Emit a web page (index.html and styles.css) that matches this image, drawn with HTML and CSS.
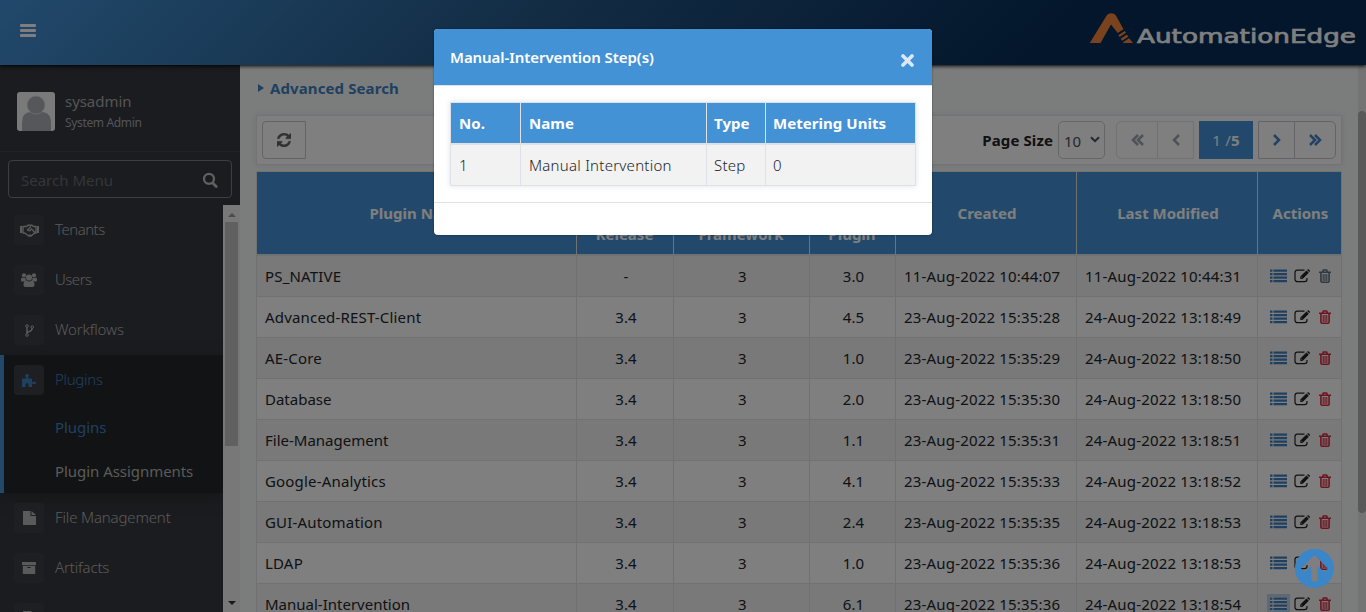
FILE: index.html
```html
<!DOCTYPE html>
<html lang="en">
<head>
<meta charset="utf-8">
<title>AutomationEdge</title>
<link rel="stylesheet" href="styles.css">
</head>
<body>
<svg class="defs" aria-hidden="true">
  <symbol id="list" viewBox="0 0 17 14"><path d="M0 .5h2.500v2.300H0zM3.500 .5H17v2.300H3.500zM0 4h2.500v2.300H0zM3.500 4H17v2.300H3.500zM0 7.500h2.500v2.300H0zM3.500 7.500H17v2.300H3.500zM0 11h2.500v2.300H0zM3.500 11H17v2.300H3.500z" fill="currentColor"/></symbol>
  <symbol id="edit" viewBox="0 0 17 14"><path d="M10.500 1.200H3.400A2.400 2.400 0 0 0 1 3.600v6.700a2.400 2.400 0 0 0 2.400 2.400h7.200a2.400 2.400 0 0 0 2.400-2.400V9" fill="none" stroke="currentColor" stroke-width="1.200"/><path d="M6.300 7.600 12.500 1.500l2.300 2.300-6.200 6.200H6.300zM13.100.9l.7-.6q.5-.3 1 .1l1 1q.4.500 0 1l-.6.700z" fill="currentColor"/><path d="M7.200 8l1.300 1.300" stroke="#ccc" stroke-width=".7"/></symbol>
  <symbol id="trash" viewBox="0 0 12 14"><path d="M0 3.200h12M3.700 2.800l.7-1.800h3.200l.7 1.800M1.900 3.200v8.800q0 1.200 1.200 1.200h5.800q1.200 0 1.200-1.200V3.200" fill="none" stroke="currentColor" stroke-width="1.600"/><path d="M4.200 5v7M6 5v7M7.800 5v7" stroke="currentColor" stroke-width="1.100"/></symbol>
  <symbol id="search" viewBox="0 0 16 16"><path d="M11 11.200 14.200 14.400" stroke="currentColor" stroke-width="2.800" stroke-linecap="round"/><circle cx="7" cy="6.800" r="5" fill="none" stroke="currentColor" stroke-width="2.300"/></symbol>
  <symbol id="refresh" viewBox="0 0 1536 1536"><path fill="currentColor" stroke="currentColor" stroke-width="30" d="M1511 928q0 5-1 7-64 268-268 434.500T764 1536q-146 0-282.500-55T238 1324l-129 129q-19 19-45 19t-45-19-19-45V960q0-26 19-45t45-19h448q26 0 45 19t19 45-19 45l-137 137q71 66 161 102t187 36q134 0 250-65t186-179q11-17 53-117 8-23 30-23h192q13 0 22.500 9.500t9.500 22.500zm25-800v448q0 26-19 45t-45 19h-448q-26 0-45-19t-19-45 19-45l138-138Q969 256 768 256q-134 0-250 65T332 500q-11 17-53 117-8 23-30 23H50q-13 0-22.500-9.500T18 608v-7q65-268 270-434.500T768 0q146 0 284 55.500T1297 212l130-129q19-19 45-19t45 19 19 45z"/></symbol>
</svg>

<header class="topbar">
  <div class="burger"><i></i><i></i><i></i></div>
  <svg class="logo" viewBox="0 0 268 40">
    <path fill="#f5873a" d="M.8 32 17 5.500Q19 2.300 22.300 2.300T27.500 5.500L34.500 18.300 28.800 22 22 13.500 11.500 32zM29.300 24.200l6.500-4.300 1.200 1.900-6.300 4.200zM31.700 27.700l6.200-4.200 1.300 2.200-6.100 4zM34.300 31l5.800-3.700L44 32H34.300z"/>
    <text x="48" y="32" textLength="219" lengthAdjust="spacingAndGlyphs">AutomationEdge</text>
  </svg>
</header>

<div class="page">
  <aside class="sidebar">
    <div class="user">
      <svg class="avatar" viewBox="0 0 38 39"><rect width="38" height="39" rx="3" fill="#f4f4f4"/><path d="M5 39V31q0-11 9-11h10q10 0 10 11v8z" fill="#abafb4"/><circle cx="19" cy="13" r="9" fill="#abafb4" stroke="#dcdcdc" stroke-width=".8"/></svg>
      <div><p class="user-name">sysadmin</p><p class="user-role">System Admin</p></div>
    </div>
    <div class="search"><span>Search Menu</span><svg><use href="#search"/></svg></div>
    <div class="menu-wrap">
      <nav class="menu">
        <a class="item"><span class="tile"><svg width="19" height="13" viewBox="0 0 19 13"><path fill="none" stroke="currentColor" stroke-width="1.400" d="M3 2.500h3.500L8 1.300h4l1.500 1.200H16v6.500h-1.500L11 12H9L4.500 9H3zM11 2.500 7.500 5.700q1.500 1.800 3 .3l1-1L15 8.500M9.500 10.500l1 1"/><path fill="currentColor" d="M0 2h2v7H0zM17 2h2v7h-2z"/></svg></span><span>Tenants</span></a>
        <a class="item"><span class="tile"><svg width="16" height="14" viewBox="0 0 16 14" fill="currentColor"><circle cx="3" cy="2.300" r="2.100"/><circle cx="13" cy="2.300" r="2.100"/><circle cx="8" cy="4.500" r="3.100"/><path d="M0 8V6.500q0-2 1.500-2 2 1 2.800 0Q4.500 7 5.500 7.500 3.500 7.500 3 8.600H.8zM16 8V6.500q0-2-1.500-2-2 1-2.800 0-.2 2.500-1.200 3 2 0 2.500 1.100h2.200zM2.500 12q0-4.500 2.800-4.500 2.700 2 5.400 0 2.800 0 2.800 4.500 0 2-2 2h-7q-2 0-2-2z"/></svg></span><span>Users</span></a>
        <a class="item"><span class="tile"><svg width="9" height="13" viewBox="0 0 9 13"><path d="M2 3v7M7.300 3.500q0 3-3 4Q2 8 2 9.500" fill="none" stroke="currentColor" stroke-width="1.500"/><g fill="#30353b" stroke="currentColor"><circle cx="2" cy="2" r="1.300"/><circle cx="2" cy="11" r="1.300"/><circle cx="7.200" cy="3" r="1.300"/></g></svg></span><span>Workflows</span></a>
        <div class="open">
          <a class="item on"><span class="tile"><svg width="14" height="13" viewBox="0 0 14 13" fill="currentColor"><path d="M0 4.500h4.200V3.800Q3 2.500 3.300 1.300 3.800 0 5 0t1.700 1.300Q7 2.500 5.900 3.800v.7H10V8q1 .4 1.600-.2.600-.7 1.500-.2.900.4.900 1.300t-.9 1.300q-.9.400-1.500-.2Q11 9.500 10 9.800V13H6.500v-2.500Q6.300 9 5 9t-1.500 1.500V13H0z"/></svg></span><span>Plugins</span></a>
          <a class="sub on">Plugins</a>
          <a class="sub">Plugin Assignments</a>
        </div>
        <a class="item"><span class="tile"><svg width="13" height="14" viewBox="0 0 13 14" fill="currentColor"><path d="M0 0h7.500v5H13v9H0zM8.500 0 13 4H8.500z"/></svg></span><span>File Management</span></a>
        <a class="item"><span class="tile"><svg width="14" height="12" viewBox="0 0 14 12" fill="currentColor"><path d="M0 0h14v3H0z"/><path fill-rule="evenodd" d="M.8 3.800h12.400V12H.8zM5.300 5v1h3.400V5z"/></svg></span><span>Artifacts</span></a>
        <a class="item"><span class="tile"><svg width="13" height="14" viewBox="0 0 13 14" fill="currentColor"><path d="M0 0h8l5 5v9H0z"/></svg></span></a>
      </nav>
      <div class="side-scroll"><i class="up"></i><b></b><i class="down"></i></div>
    </div>
  </aside>

  <main class="content">
    <h2 class="adv"><i></i>Advanced Search</h2>
    <div class="toolbar">
      <span class="refresh"><svg><use href="#refresh"/></svg></span>
      <div class="paging">
        <b class="size-label">Page Size</b>
        <span class="size">10<svg width="10" height="7" viewBox="0 0 10 7"><path d="M1 1.200l4 4 4-4" fill="none" stroke="currentColor" stroke-width="2"/></svg></span>
        <span class="pair left"><i><svg width="13" height="12" viewBox="0 0 13 12"><path d="M7 1 2 6l5 5M12 1 7 6l5 5"/></svg></i><i><svg width="8" height="12" viewBox="0 0 8 12"><path d="M7 1 2 6l5 5"/></svg></i></span>
        <span class="current">1 /<b>5</b></span>
        <span class="pair right"><i><svg width="8" height="12" viewBox="0 0 8 12"><path d="M1 1l5 5-5 5"/></svg></i><i><svg width="13" height="12" viewBox="0 0 13 12"><path d="M1 1l5 5-5 5M6 1l5 5-5 5"/></svg></i></span>
      </div>
    </div>
    <div class="grid">
      <div class="row head"><span>Plugin Name</span><span>Min<br>AE<br>Release</span><span>Min<br>Plugin<br>Framework</span><span>Latest<br>&nbsp;<br>Plugin</span><span>Created</span><span>Last Modified</span><span>Actions</span></div>
      <div class="row"><span>PS_NATIVE</span><span>-</span><span>3</span><span>3.0</span><span>11-Aug-2022 10:44:07</span><span>11-Aug-2022 10:44:31</span><span class="acts off"><svg><use href="#list"/></svg><svg><use href="#edit"/></svg><svg><use href="#trash"/></svg></span></div>
      <div class="row"><span>Advanced-REST-Client</span><span>3.4</span><span>3</span><span>4.5</span><span>23-Aug-2022 15:35:28</span><span>24-Aug-2022 13:18:49</span><span class="acts"><svg><use href="#list"/></svg><svg><use href="#edit"/></svg><svg><use href="#trash"/></svg></span></div>
      <div class="row"><span>AE-Core</span><span>3.4</span><span>3</span><span>1.0</span><span>23-Aug-2022 15:35:29</span><span>24-Aug-2022 13:18:50</span><span class="acts"><svg><use href="#list"/></svg><svg><use href="#edit"/></svg><svg><use href="#trash"/></svg></span></div>
      <div class="row"><span class="tight">Database</span><span>3.4</span><span>3</span><span>2.0</span><span>23-Aug-2022 15:35:30</span><span>24-Aug-2022 13:18:50</span><span class="acts"><svg><use href="#list"/></svg><svg><use href="#edit"/></svg><svg><use href="#trash"/></svg></span></div>
      <div class="row"><span class="tight">File-Management</span><span>3.4</span><span>3</span><span>1.1</span><span>23-Aug-2022 15:35:31</span><span>24-Aug-2022 13:18:51</span><span class="acts"><svg><use href="#list"/></svg><svg><use href="#edit"/></svg><svg><use href="#trash"/></svg></span></div>
      <div class="row"><span>Google-Analytics</span><span>3.4</span><span>3</span><span>4.1</span><span>23-Aug-2022 15:35:33</span><span>24-Aug-2022 13:18:52</span><span class="acts"><svg><use href="#list"/></svg><svg><use href="#edit"/></svg><svg><use href="#trash"/></svg></span></div>
      <div class="row"><span>GUI-Automation</span><span>3.4</span><span>3</span><span>2.4</span><span>23-Aug-2022 15:35:35</span><span>24-Aug-2022 13:18:53</span><span class="acts"><svg><use href="#list"/></svg><svg><use href="#edit"/></svg><svg><use href="#trash"/></svg></span></div>
      <div class="row"><span>LDAP</span><span>3.4</span><span>3</span><span>1.0</span><span>23-Aug-2022 15:35:36</span><span>24-Aug-2022 13:18:53</span><span class="acts"><svg><use href="#list"/></svg><svg><use href="#edit"/></svg><svg><use href="#trash"/></svg></span></div>
      <div class="row"><span class="tight">Manual-Intervention</span><span>3.4</span><span>3</span><span>6.1</span><span>23-Aug-2022 15:35:36</span><span>24-Aug-2022 13:18:54</span><span class="acts"><svg class="focus"><use href="#list"/></svg><svg><use href="#edit"/></svg><svg><use href="#trash"/></svg></span></div>
    </div>
  </main>
  <div class="page-scroll"><b></b></div>
</div>

<div class="backdrop"></div>
<svg class="to-top" viewBox="0 0 39 39"><path fill-rule="evenodd" fill="#3a86c8" d="M19.500 0a19.500 19.500 0 1 1 0 39 19.500 19.500 0 0 1 0-39zM19.500 6 6 19.500l3.600 3.600 6.700-6.200V31q0 1.500 1.500 1.500h3.400q1.500 0 1.500-1.500V16.900l6.700 6.200L33 19.500z"/></svg>

<section class="modal">
  <div class="modal-head"><h1>Manual-Intervention Step(s)</h1><svg width="13" height="13" viewBox="0 0 13 13"><path d="M2 2l9 9M11 2l-9 9" stroke="#dae9f7" stroke-width="3.600" stroke-linecap="round"/></svg></div>
  <div class="modal-body">
    <div class="steps">
      <div class="step-row step-head"><span>No.</span><span>Name</span><span>Type</span><span>Metering Units</span></div>
      <div class="step-row"><span>1</span><span>Manual Intervention</span><span>Step</span><span>0</span></div>
    </div>
  </div>
  <div class="modal-foot"></div>
</section>
</body>
</html>
```
FILE: styles.css
```css
* { box-sizing: border-box; }
body { margin: 0; width: 1366px; height: 612px; overflow: hidden; position: relative; display: flex; flex-direction: column; font: 15px/24px "Noto Sans", sans-serif; letter-spacing: .18px; color: #212529; }
p, h1, h2 { margin: 0; }
i { font-style: normal; }
.defs { position: absolute; width: 0; height: 0; }

.topbar { flex: none; height: 65px; display: flex; justify-content: space-between; padding: 11px 9px 0 20px; background: linear-gradient(135deg, #4492d6 0, #265a8a 38%, #062c56 77%); box-shadow: 0 1px 4px #000; position: relative; z-index: 2; }
.burger { display: flex; flex-direction: column; gap: 2px; padding-top: 13px; }
.burger i { width: 16px; height: 3px; border-radius: 1px; background: #fff; }
.logo { width: 268px; height: 40px; }
.logo text { font: 20px "DejaVu Sans", sans-serif; letter-spacing: 0; fill: #fff; stroke: #fff; stroke-width: .7px; }

.page { flex: 1; min-height: 0; display: flex; }
.sidebar { width: 240px; flex: none; background: #36383e; display: flex; flex-direction: column; color: #b5b5b5; }
.user { height: 87px; flex: none; border-bottom: 1px solid #44464b; display: flex; gap: 10px; padding: 27px 17px 0; }
.avatar { width: 38px; height: 39px; }
.user-name { line-height: 20px; margin-top: -1px; letter-spacing: -.05px; color: #aaa; }
.user-role { font-size: 12px; line-height: 22px; margin-top: 1px; letter-spacing: -.35px; color: #a5a9b2; }
.search { flex: none; height: 38px; margin: 8px 8px 7px; border: 1px solid #7b7d82; border-radius: 4px; display: flex; align-items: center; justify-content: space-between; padding: 2px 13px 0 12px; color: #686c72; letter-spacing: 0; }
.search svg { width: 16px; height: 16px; margin-top: -1px; color: #c0c0c0; }
.menu-wrap { flex: 1; min-height: 0; display: flex; overflow: hidden; }
.menu { width: 223px; }
.item { height: 50px; display: flex; align-items: center; gap: 11px; padding-left: 14px; font-weight: 300; letter-spacing: -.15px; }
.item > span + span { margin-top: -2px; }
.item:nth-child(1) > span + span, .item:nth-child(2) > span + span { letter-spacing: -.5px; }
.menu > .item:nth-child(1) > span + span { letter-spacing: -.5px; }
.open .item > span + span { letter-spacing: -.3px; }
.tile { width: 30px; height: 30px; border-radius: 4px; background: #3b3f45; display: grid; place-items: center; }
.open { height: 138px; background: #242628; box-shadow: inset 4px 0 #4492d6, 0 4px 14px #292b2f; }
.sub { display: block; height: 44px; padding: 10px 0 0 55px; letter-spacing: -.05px; }
.on { color: #4080c0; }
.side-scroll { width: 17px; background: #f1f1f1; display: flex; flex-direction: column; align-items: center; }
.side-scroll b { width: 13px; height: 224px; background: #c1c1c1; margin: 5px 0 154px; flex: none; }
.side-scroll i { border: 4px solid transparent; }
.side-scroll .up { height: 12px; border-bottom-color: #999; border-top: 0; padding-top: 8px; clip-path: inset(8px 0 0); }
.side-scroll .down { border-top-color: #333; border-bottom: 0; margin-top: 1px; }

.content { width: 1118px; padding: 11px 16px 0; background: #f7faf9; }
.adv { display: flex; align-items: center; gap: 6px; font-size: 15px; line-height: 24px; letter-spacing: .1px; color: #4080c0; padding-left: 2px; }
.adv i { border: 4px solid transparent; border-left: 6px solid #4080c0; border-right: 0; }
.toolbar { margin-top: 15px; height: 50px; border: 1px solid #e3e6ea; background: #fff; box-shadow: 0 0 6px #dde2e8; display: flex; justify-content: space-between; padding: 5px; }
.refresh { width: 44px; height: 38px; border: 1px solid #c8c9cb; border-radius: 4px 0 0 4px; display: grid; place-items: center; }
.refresh svg { width: 14px; height: 14px; color: #5d6164; }
.paging { display: flex; }
.size-label { padding: 7px 5px 0 0; color: #222; letter-spacing: .1px; }
.size { width: 47px; height: 38px; border: 1px solid #c8ccd0; border-radius: 5px; display: flex; justify-content: space-between; align-items: center; padding: 2px 4px 0 5px; color: #495057; letter-spacing: 0; }
.size svg { margin-top: -3px; }
.pair { display: flex; border: 1px solid #dee2e6; color: #9ea3a8; }
.pair i { display: grid; place-items: center; }
.pair svg { fill: none; stroke: currentColor; stroke-width: 2.500; margin-top: -1px; }
.left { margin: 0 5px 0 11px; width: 78px; border-radius: 5px 0 0 5px; }
.left i:first-child { width: 41px; border-right: 1px solid #dee2e6; }
.left i:last-child, .right i:last-child { flex: 1; }
.current { width: 54px; background: #4492d6; color: #fff; padding-top: 7px; text-align: center; letter-spacing: .2px; }
.right { margin-left: 5px; width: 78px; border-color: #c4c9ce; border-radius: 0 5px 5px 0; color: #4484c8; }
.right i:first-child { width: 36px; border-right: 1px solid #c4c9ce; }

.grid { margin-top: 6px; border-top: 1px solid #dee2e6; border-right: 1px solid #dee2e6; }
.row { display: grid; grid-template-columns: 320px 97px 136px 86px 181px 181px 84px; height: 41px; border-bottom: 1px solid #dee2e6; background: #fff; }
.row:nth-child(even) { background: #f2f2f2; }
.row > span { border-left: 1px solid #dee2e6; padding: 8px 8px 0; white-space: nowrap; }
.row > span:nth-child(n+2):nth-child(-n+4) { text-align: center; padding-left: 10px; }
.row > .tight { letter-spacing: 0; }
.head { height: 84px; border-bottom-width: 2px; background: #4492d6; color: #fff; font-weight: 700; line-height: 22px; letter-spacing: 0; }
.row.head > span { display: grid; place-content: center; text-align: center; padding: 0 4px 1px 6px; }
.row.head > span:nth-child(n+2):nth-child(-n+4) { padding: 0 5px 2px 4px; }
.row > .acts { display: flex; padding: 13px 0 0 12px; }
.acts svg { width: 17px; height: 14px; color: #4080c0; }
.acts svg:nth-child(2) { margin: 0 8px 0 7px; color: #222; }
.acts svg:nth-child(3) { width: 12px; color: #d92a40; }
.off svg:nth-child(3) { color: #607080; }
.acts .focus { box-shadow: 0 0 0 3px #bdd3e8; }
.page-scroll { width: 8px; background: #e8e8e8; padding-top: 46px; }
.page-scroll b { display: block; height: 402px; border-radius: 4px; background: #b4b2b2; }

.backdrop { position: absolute; inset: 0; background: rgba(0, 0, 0, .5); z-index: 5; }
.to-top { position: absolute; left: 1295px; top: 549px; width: 39px; height: 39px; z-index: 6; }
.modal { position: absolute; left: 434px; top: 29px; width: 498px; height: 206px; z-index: 7; background: #fff; border-radius: 4px; overflow: hidden; box-shadow: 0 0 2px rgba(0,0,0,.5); }
.modal-head { height: 57px; background: #4492d6; border-bottom: 1px solid #dee2e6; display: flex; justify-content: space-between; padding: 16px 18px 0 16px; color: #fff; }
.modal-head h1 { font-size: 15px; line-height: 24px; font-weight: 600; letter-spacing: -.06px; }
.modal-head svg { margin-top: 9px; }
.modal-body { padding: 16px 16px 16px; height: 116px; }
.steps { border: 1px solid #dee2e6; border-bottom: 0; box-shadow: 0 0 6px #dde4ec; }
.step-row { display: grid; grid-template-columns: 69px 186px 59px 1fr; height: 41px; background: #f2f2f2; border-bottom: 1px solid #dee2e6; font-weight: 350; letter-spacing: .25px; }
.step-row span { padding: 8px 8px 0; }
.step-row span + span { border-left: 1px solid #dee2e6; }
.step-row span:nth-child(n+3) { padding-left: 7px; }
.step-head { height: 42px; border-bottom-width: 2px; background: #4492d6; color: #fff; font-weight: 700; letter-spacing: .05px; }
.modal-foot { border-top: 1px solid #dee2e6; }
```
